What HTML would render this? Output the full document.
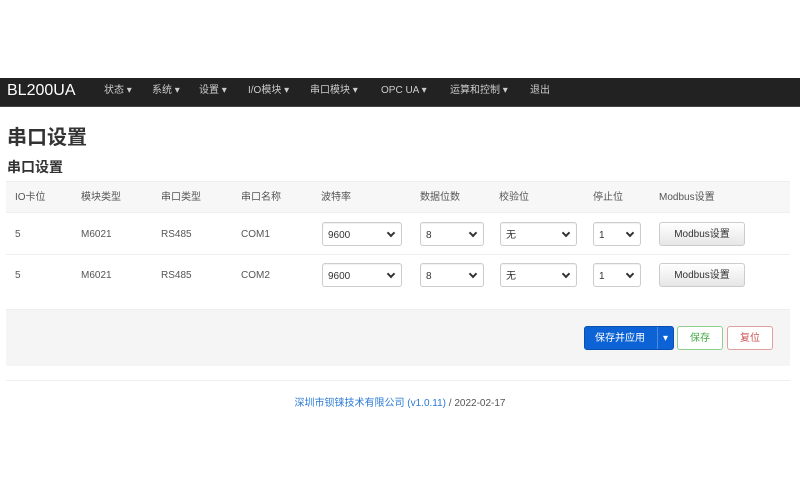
<!DOCTYPE html>
<html><head><meta charset="utf-8"><style>
*{box-sizing:border-box;margin:0;padding:0}
body{width:800px;height:500px;background:#fff;font-family:"Liberation Sans","Noto Sans CJK SC",sans-serif;position:relative;overflow:hidden;color:#333}
.nav{position:absolute;left:0;top:78px;width:800px;height:29px;background:#222;border-bottom:1px solid #444}
.nav .brand{position:absolute;left:7px;top:1px;line-height:24px;color:#fff;font-size:16px}
.nav span.i{position:absolute;top:6px;height:14px;line-height:14px;color:#ccc;font-size:10px}
.a{position:absolute;font-size:10px;line-height:12px;height:12px;color:#555}
h1{position:absolute;left:7px;top:125px;font-size:20px;line-height:26px;font-weight:bold;color:#333}
h2{position:absolute;left:7px;top:158px;font-size:14px;line-height:18px;color:#333}
.sel{position:absolute;height:24px;border:1px solid #ccc;border-radius:3px;background:#fff;font-size:10px;line-height:12px;padding:7px 5px 0;color:#333;box-shadow:inset 0 1px 1px rgba(0,0,0,.06)}
.sel:after{content:"";position:absolute;right:7px;top:7px;width:4px;height:4px;border-right:2px solid #333;border-bottom:2px solid #333;transform:rotate(45deg)}
.btn{position:absolute;height:24px;border-radius:3px;font-size:10px;text-align:center;line-height:23px}
</style></head><body>
<div class="nav"><span class="brand">BL200UA</span>
<span class="i" style="left:104px">状态 ▾</span><span class="i" style="left:152px">系统 ▾</span><span class="i" style="left:199px">设置 ▾</span><span class="i" style="left:248px">I/O模块 ▾</span><span class="i" style="left:310px">串口模块 ▾</span><span class="i" style="left:381px">OPC UA ▾</span><span class="i" style="left:450px">运算和控制 ▾</span><span class="i" style="left:530px">退出</span></div>
<h1>串口设置</h1><h2>串口设置</h2>
<div style="position:absolute;left:6px;top:181px;width:784px;height:31px;background:#f7f7f7;border-top:1px solid #eee"></div>
<div style="position:absolute;left:6px;top:254px;width:784px;height:1px;background:#eee"></div>
<div style="position:absolute;left:6px;top:212px;width:784px;height:1px;background:#eee"></div>
<div style="position:absolute;left:6px;top:309px;width:784px;height:57px;background:#f5f5f5;border-top:1px solid #eee"></div>
<div style="position:absolute;left:6px;top:380px;width:784px;height:1px;background:#eee"></div>
<span class="a" style="left:15px;top:192px">IO卡位</span><span class="a" style="left:81px;top:192px">模块类型</span><span class="a" style="left:161px;top:192px">串口类型</span><span class="a" style="left:241px;top:192px">串口名称</span><span class="a" style="left:321px;top:192px">波特率</span><span class="a" style="left:420px;top:192px">数据位数</span><span class="a" style="left:499px;top:192px">校验位</span><span class="a" style="left:593px;top:192px">停止位</span><span class="a" style="left:659px;top:192px">Modbus设置</span>
<span class="a" style="left:15px;top:229px">5</span><span class="a" style="left:81px;top:229px">M6021</span><span class="a" style="left:161px;top:229px">RS485</span><span class="a" style="left:241px;top:229px">COM1</span>
<span class="a" style="left:15px;top:270px">5</span><span class="a" style="left:81px;top:270px">M6021</span><span class="a" style="left:161px;top:270px">RS485</span><span class="a" style="left:241px;top:270px">COM2</span>
<div class="sel" style="left:322px;top:222px;width:80px">9600</div><div class="sel" style="left:420px;top:222px;width:64px">8</div><div class="sel" style="left:500px;top:222px;width:77px">无</div><div class="sel" style="left:593px;top:222px;width:48px">1</div>
<div class="btn" style="left:659px;top:222px;width:86px;border:1px solid #ccc;background:linear-gradient(#fff,#e6e6e6);color:#333">Modbus设置</div>
<div class="sel" style="left:322px;top:263px;width:80px">9600</div><div class="sel" style="left:420px;top:263px;width:64px">8</div><div class="sel" style="left:500px;top:263px;width:77px">无</div><div class="sel" style="left:593px;top:263px;width:48px">1</div>
<div class="btn" style="left:659px;top:263px;width:86px;border:1px solid #ccc;background:linear-gradient(#fff,#e6e6e6);color:#333">Modbus设置</div>
<div class="btn" style="left:584px;top:326px;width:90px;background:#0d63d6;color:#fff;border:1px solid #0a50b0"><span style="position:absolute;left:10px">保存并应用</span><span style="position:absolute;left:72px;top:0;width:1px;height:22px;background:#4a8ae0"></span><span style="position:absolute;left:78px">▾</span></div>
<div class="btn" style="left:677px;top:326px;width:46px;border:1px solid #8fd08f;background:#fff;color:#4a4">保存</div>
<div class="btn" style="left:727px;top:326px;width:46px;border:1px solid #e0a0a0;background:#fff;color:#c55">复位</div>
<div style="position:absolute;left:0;width:800px;top:397px;line-height:14px;text-align:center;font-size:10px;color:#555"><span style="color:#2a7ad5">深圳市钡铼技术有限公司 (v1.0.11)</span> / 2022-02-17</div>
</body></html>
